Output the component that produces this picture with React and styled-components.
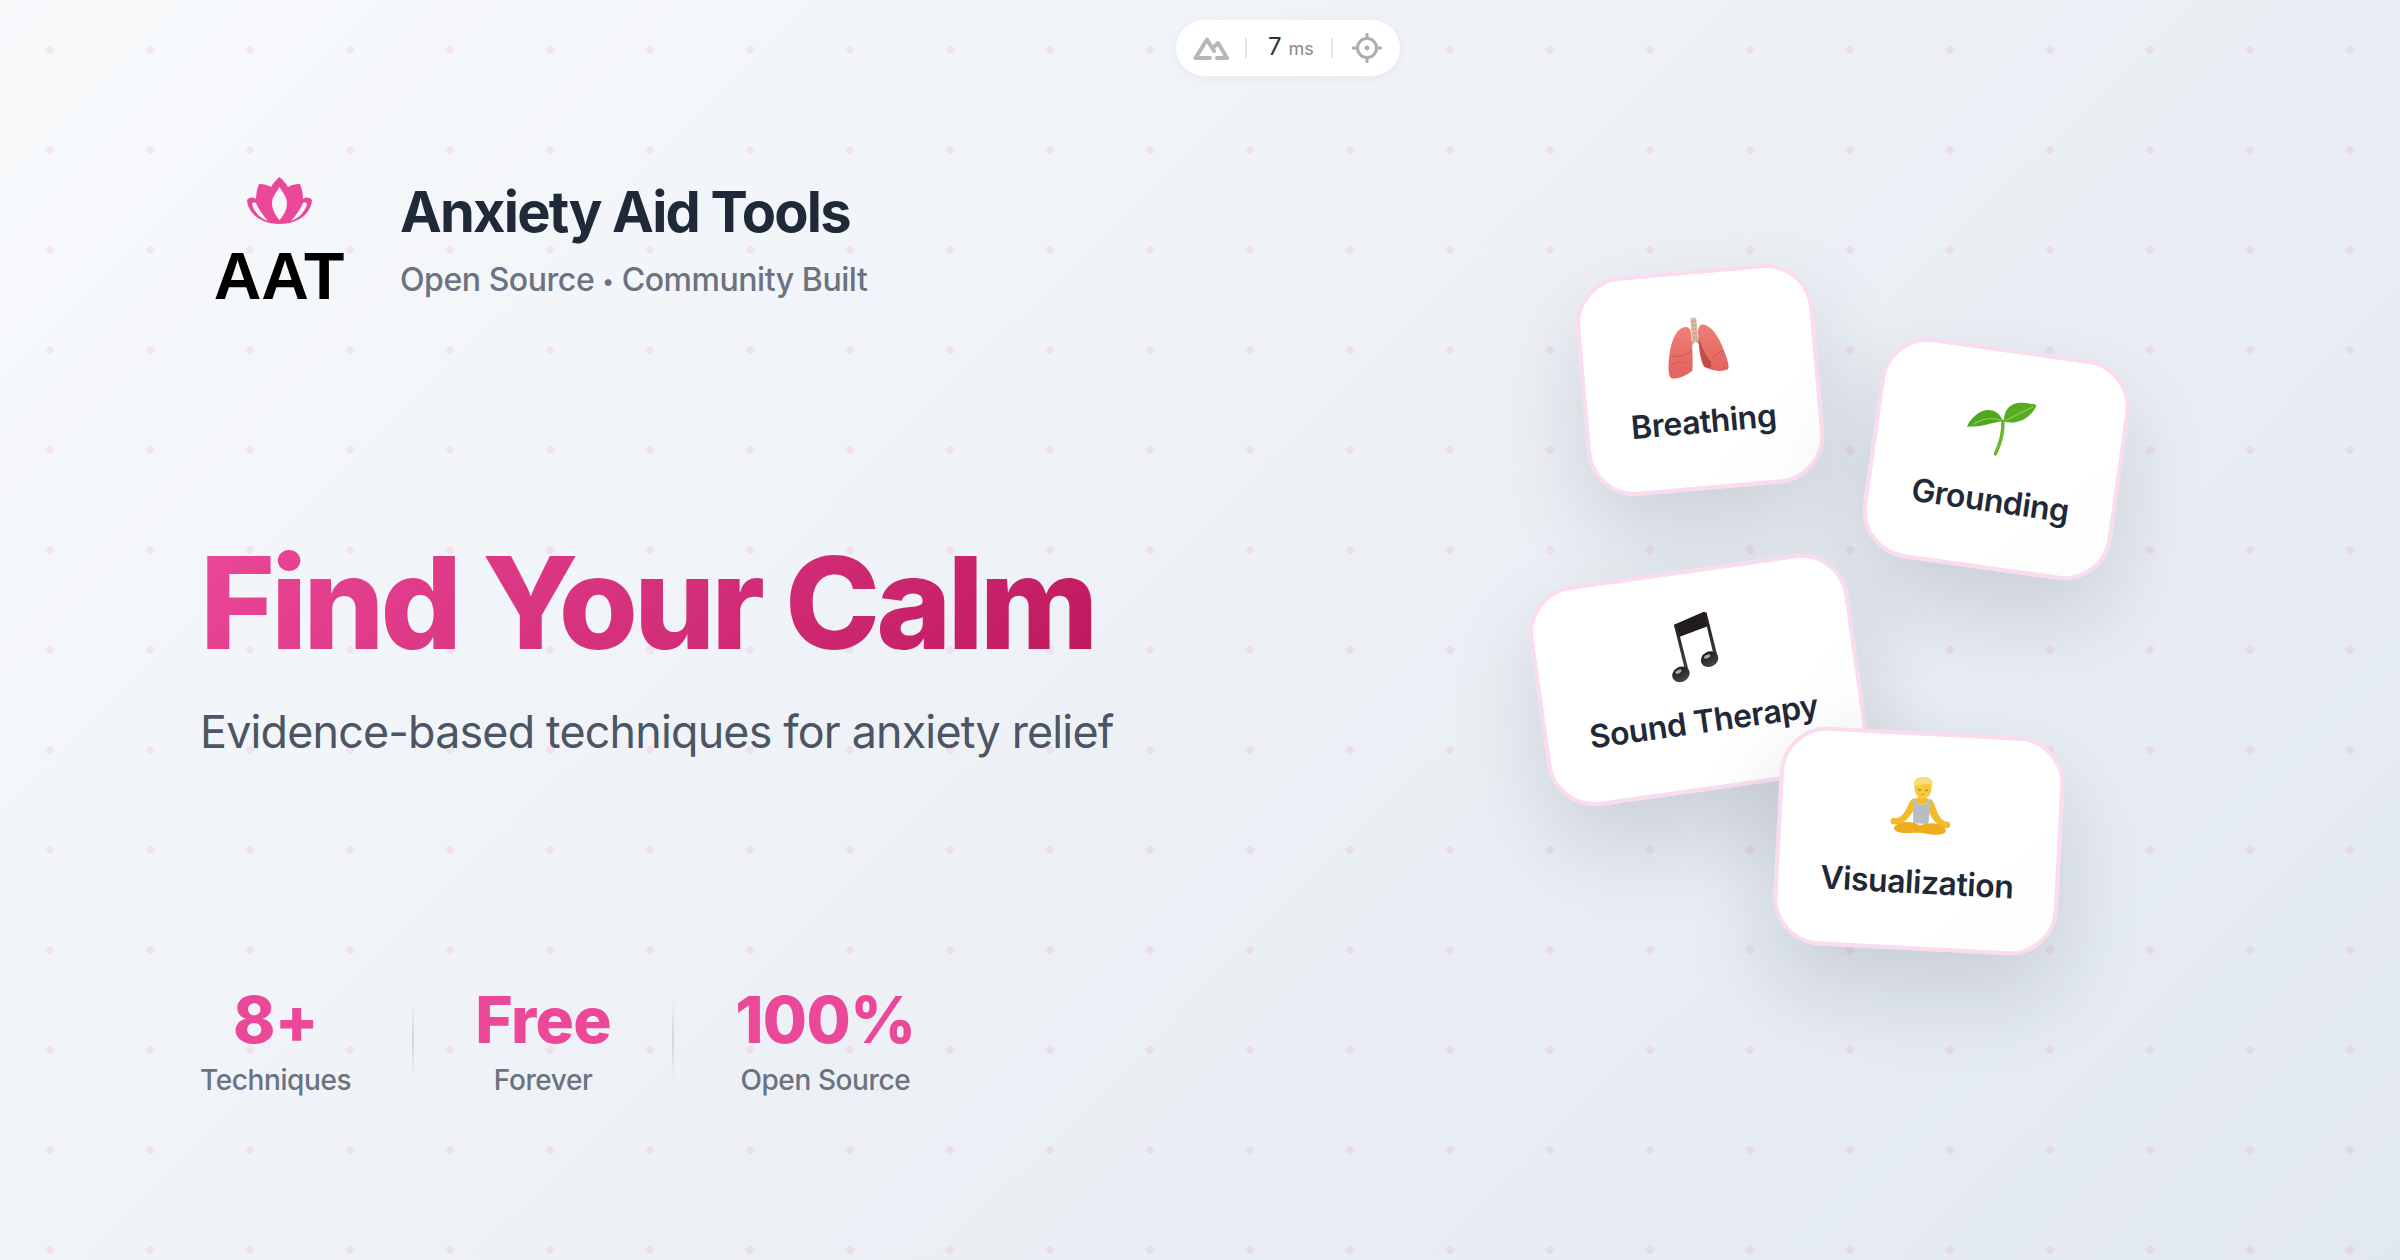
import React from 'react';
import styled, { createGlobalStyle } from 'styled-components';

const Global = createGlobalStyle`
  html, body { margin: 0; padding: 0; }
  body { font-family: Inter, "Liberation Sans", sans-serif; }
`;

const Page = styled.div`
  position: relative;
  width: 2400px;
  height: 1260px;
  overflow: hidden;
  box-sizing: border-box;
  padding: 177px 200px 0;
  background-color: #f8fafc;
  background-image:
    radial-gradient(circle at 50px 50px, rgba(236, 72, 153, 0.1) 4px, transparent 4.6px),
    linear-gradient(135deg, #f8fafc 0%, #e2e8f0 100%);
  background-size: 100px 100px, 100% 100%;
`;

const Left = styled.div`
  display: flex;
  flex-direction: column;
  align-items: flex-start;
`;

const Brand = styled.div`
  display: flex;
  align-items: flex-start;
  gap: 56px;
  margin-left: 14px;
`;

const LogoMark = styled.div`
  display: flex;
  flex-direction: column;
  align-items: center;
  width: 130px;
`;

const LogoText = styled.div`
  font-family: "Liberation Sans", Arial, sans-serif;
  font-weight: 700;
  font-size: 66px;
  line-height: 66px;
  color: #000;
  margin-top: 18px;
`;

const BrandText = styled.div`
  display: flex;
  flex-direction: column;
  padding-top: 1px;
`;

const BrandTitle = styled.h1`
  margin: 0;
  font-size: 56px;
  line-height: 68px;
  font-weight: 700;
  color: #1f2937;
  letter-spacing: -1.8px;
`;

const BrandSub = styled.div`
  font-size: 32px;
  line-height: 44px;
  font-weight: 500;
  color: #6b7280;
  letter-spacing: -0.45px;
  margin-top: 12px;
`;

const Bullet = styled.span`
  font-size: 22px;
  vertical-align: 2px;
`;

const Headline = styled.h2`
  margin: 217px 0 0;
  font-size: 128px;
  line-height: 154px;
  font-weight: 800;
  letter-spacing: -4px;
  color: transparent;
  background: linear-gradient(135deg, #ec4899 0%, #be185d 100%);
  -webkit-background-clip: text;
  background-clip: text;
`;

const Tagline = styled.p`
  margin: 22px 0 0;
  font-size: 44.8px;
  line-height: 60px;
  font-weight: 400;
  letter-spacing: -0.8px;
  color: #4b5563;
`;

const Stats = styled.div`
  display: flex;
  align-items: center;
  gap: 61px;
  margin-top: 220px;
`;

const Stat = styled.div`
  display: flex;
  flex-direction: column;
  align-items: center;
`;

const StatValue = styled.div`
  font-size: 64px;
  line-height: 76px;
  font-weight: 800;
  letter-spacing: -0.6px;
  color: #ec4899;
`;

const StatLabel = styled.div`
  font-size: 28px;
  line-height: 36px;
  font-weight: 500;
  letter-spacing: -0.4px;
  color: #6b7280;
  margin-top: 4px;
`;

const Divider = styled.div`
  width: 2px;
  height: 80px;
  background: linear-gradient(180deg, transparent, #d1d5db, transparent);
`;

const Card = styled.div`
  position: absolute;
  left: ${p => p.$x}px;
  top: ${p => p.$y}px;
  transform: translate(-50%, -50%) rotate(${p => p.$rot}deg);
  z-index: ${p => p.$z};
  box-sizing: border-box;
  height: ${p => p.$h}px;
  display: flex;
  flex-direction: column;
  align-items: center;
  justify-content: center;
  padding: 0 42px 4px;
  border: 4px solid #fbdcee;
  border-radius: 48px;
  background: linear-gradient(135deg, #ffffff 70%, #fcfcfd 100%);
  box-shadow: 0 40px 90px rgba(15, 23, 42, 0.14);
`;

const CardIcon = styled.div`
  height: 64px;
  display: flex;
  align-items: center;
  justify-content: center;
  transform: translateY(${p => p.$nudge}px);
`;

const CardLabel = styled.div`
  margin-top: 23px;
  font-size: 32px;
  line-height: 40px;
  font-weight: 600;
  letter-spacing: -0.45px;
  color: #1f2937;
  white-space: nowrap;
`;

const DevBar = styled.div`
  position: absolute;
  left: 1176px;
  top: 20px;
  width: 224px;
  height: 56px;
  box-sizing: border-box;
  border-radius: 28px;
  background: #fff;
  box-shadow: 0 2px 12px rgba(15, 23, 42, 0.05);
  display: flex;
  align-items: center;
  padding: 0 17px;
`;

const BarSep = styled.div`
  width: 2px;
  height: 20px;
  background: #e4e4e4;
  margin: 0 ${p => p.$right}px 0 ${p => p.$left}px;
  flex: none;
`;

const Time = styled.div`
  display: flex;
  align-items: baseline;
  gap: 7px;
  font-size: 24px;
  line-height: 28px;
  color: #333;
  span { font-size: 18px; color: #888; }
`;

const NuxtIcon = () => (
  <svg width="36" height="24" viewBox="0 0 36 24" fill="none" stroke="#b6b6b6" strokeWidth="4" strokeLinejoin="round" strokeLinecap="round">
    <path d="M2.5 22 L14 3.5 L21 15 M2.5 22 H17" />
    <path d="M20 12 L25 7 L34 22 H24" />
  </svg>
);

const TargetIcon = () => (
  <svg width="30" height="30" viewBox="0 0 30 30" fill="none" stroke="#adadad" strokeWidth="3">
    <circle cx="15" cy="15" r="9.5" />
    <path d="M15 1 V5 M15 25 V29 M1 15 H5 M25 15 H29" strokeLinecap="round" />
    <circle cx="15" cy="15" r="2.4" fill="#adadad" stroke="none" />
  </svg>
);

const LotusIcon = () => (
  <svg width="67" height="48" viewBox="0 0 67 48">
    <path
      d="M33.5 0 C30 3 27 6 25 10 C22 8 18 7 13 7 C11 12 10 17 10 22 C7 20 4 20 1 23 C2 36 14 47 33.5 47 C53 47 65 36 66 23 C63 20 60 20 57 22 C57 17 56 12 54 7 C49 7 45 8 42 10 C40 6 37 3 33.5 0 Z"
      fill="#ec4899"
    />
    <path d="M33.5 10 C30 16 26 20 26 26 C26 33 30 39 33.5 43 C37 39 41 33 41 26 C41 20 37 16 33.5 10 Z" fill="#f5f7fb" />
    <path d="M6 27 C8 35 14 41 22 44 C17 38 13 33 10 26 C9 25 7 25 6 27 Z" fill="#f5f7fb" />
    <path d="M61 27 C59 35 53 41 45 44 C50 38 54 33 57 26 C58 25 60 25 61 27 Z" fill="#f5f7fb" />
  </svg>
);

const LungsIcon = () => (
  <svg width="62" height="60" viewBox="0 0 62 60">
    <defs>
      <linearGradient id="lungL" x1="0" y1="0" x2="0" y2="1">
        <stop offset="0" stopColor="#ee7f77" />
        <stop offset="1" stopColor="#e4625d" />
      </linearGradient>
    </defs>
    <rect x="26.5" y="0" width="6" height="24" rx="2" fill="#dcb9a6" />
    <path d="M27 4 H32 M27 8 H32 M27 12 H32 M27 16 H32 M27 20 H32" stroke="#c49a84" strokeWidth="1" />
    <path d="M29.5 22 L25 27 M29.5 22 L35 27" stroke="#d4ac96" strokeWidth="3" />
    <path d="M20 9 C12 9 5 22 2 38 C0 48 -1 57 3 59 C10 60 18 57 24 53 C26 40 26 25 26 17 C26 11 24 9 20 9 Z" fill="url(#lungL)" />
    <path d="M38 8 C46 9 53 20 57 35 C60 45 62 54 59 55 C52 57 43 55 36 50 C33 38 33 22 33 16 C33 11 35 8 38 8 Z" fill="url(#lungL)" />
    <path d="M33 20 C32 32 33 44 36 50 C41 54 46 52 42 44 C38 38 35 28 33 20 Z" fill="#b5403d" opacity="0.75" />
    <path d="M4 36 C11 39 18 38 25 33 M3 46 C8 42 14 42 18 46" stroke="#cf5a54" strokeWidth="1" fill="none" />
    <path d="M57 36 C53 36 50 38 46 42" stroke="#cf5a54" strokeWidth="1" fill="none" />
  </svg>
);

const SproutIcon = () => (
  <svg width="66" height="58" viewBox="0 0 68 56" preserveAspectRatio="none">
    <path d="M33 53 C36 44 38 32 36 21" stroke="#6cb52f" strokeWidth="3.6" fill="none" strokeLinecap="round" />
    <path d="M0 31 C3 21 12 12 22 12 C29 12 34 17 36 21 C30 22 22 26 15 28 C9 30 4 30 0 31 Z" fill="#4ea71f" />
    <path d="M37 21 C35 11 40 3 50 1 C56 0 63 0 68 1 C66 8 61 15 54 18 C48 21 42 22 37 21 Z" fill="#57ac24" />
    <path d="M38 20 C46 15 55 9 65 3" stroke="#8fd455" strokeWidth="1" fill="none" />
    <path d="M6 28 C14 21 24 19 34 20" stroke="#8fd455" strokeWidth="1" fill="none" />
  </svg>
);

const NotesIcon = () => (
  <svg width="50" height="68" viewBox="0 0 50 68">
    <defs>
      <linearGradient id="noteFill" x1="0" y1="0" x2="0" y2="1">
        <stop offset="0" stopColor="#1f1b1d" />
        <stop offset="1" stopColor="#42464c" />
      </linearGradient>
    </defs>
    <path d="M9 10 L41 1 L43 16 L11 23 Z" fill="#231c1e" />
    <path d="M9 10 L12 10 L17.5 60 L14 60 Z M40 2 L43 2 L48 49 L44.5 50 Z" fill="url(#noteFill)" />
    <ellipse cx="9" cy="60" rx="9" ry="7.5" fill="url(#noteFill)" transform="rotate(-20 9 60)" />
    <ellipse cx="39.5" cy="49" rx="9" ry="7.5" fill="url(#noteFill)" transform="rotate(-20 39.5 49)" />
    <ellipse cx="7" cy="57" rx="3.4" ry="1.7" fill="#a5abb3" transform="rotate(-20 7 57)" />
    <ellipse cx="37.5" cy="46" rx="3.4" ry="1.7" fill="#a5abb3" transform="rotate(-20 37.5 46)" />
  </svg>
);

const PersonIcon = () => (
  <svg width="60" height="58" viewBox="0 0 60 58">
    <path d="M22 22 C18 24 17 30 14 36 C11 41 7 43 3 44 L5 49 C10 49 15 46 19 40 C22 36 24 32 25 28 Z" fill="#f3bb2c" />
    <path d="M39 22 C43 24 44 30 47 36 C50 41 53 43 57 45 L55 50 C50 49 45 46 41 40 C38 36 36 32 35 28 Z" fill="#f3bb2c" />
    <circle cx="3.5" cy="46" r="3.4" fill="#f3bb2c" />
    <circle cx="56.5" cy="47" r="3.4" fill="#f3bb2c" />
    <path d="M24 22 C24 26 26 28 30 28 C34 28 37 26 37 22 L39.5 23 L38 47 H23 L21.5 23 Z" fill="#b8bdc4" />
    <path d="M24 22 C24 26 26 28 30 28 C34 28 37 26 37 22 L33 20 H28 Z" fill="#f3bb2c" />
    <path d="M4 52 C8 46 20 44 30 49 C40 44 52 46 56 52 C57 57 46 58 38 57 C34 56 26 56 22 57 C14 58 3 57 4 52 Z" fill="#efac1c" />
    <ellipse cx="31" cy="12" rx="8.5" ry="10" fill="#f7c93f" />
    <path d="M22 11 C19 3 26 0 32 0 C38 0 42 4 40 11 C39 7 36 6 33 7 C29 9 24 8 22 11 Z" fill="#f9dd7c" />
    <path d="M26 13 C27 14 28 14 29 13 M33 13 C34 14 35 14 36 13 M30 17.5 H32" stroke="#a5761a" strokeWidth="1" fill="none" />
  </svg>
);

const cards = [
  { label: 'Breathing', icon: <LungsIcon />, x: 1699.5, y: 380, rot: -5, h: 220, nudge: 0, z: 1 },
  { label: 'Grounding', icon: <SproutIcon />, x: 1996, y: 459, rot: 8, h: 222, nudge: 2, z: 1 },
  { label: 'Sound Therapy', icon: <NotesIcon />, x: 1697.5, y: 680, rot: -8, h: 222, nudge: -1, z: 1 },
  { label: 'Visualization', icon: <PersonIcon />, x: 1919, y: 840.5, rot: 3, h: 219, nudge: -2, z: 2 },
];

const stats = [
  { value: '8+', label: 'Techniques' },
  { value: 'Free', label: 'Forever' },
  { value: '100%', label: 'Open Source' },
];

export default function App() {
  return (
    <Page>
      <Global />
      <DevBar>
        <NuxtIcon />
        <BarSep $left={16} $right={21} />
        <Time>7<span>ms</span></Time>
        <BarSep $left={17} $right={19} />
        <TargetIcon />
      </DevBar>

      <Left>
        <Brand>
          <LogoMark>
            <LotusIcon />
            <LogoText>AAT</LogoText>
          </LogoMark>
          <BrandText>
            <BrandTitle>Anxiety Aid Tools</BrandTitle>
            <BrandSub>Open Source <Bullet>•</Bullet> Community Built</BrandSub>
          </BrandText>
        </Brand>
        <Headline>Find Your Calm</Headline>
        <Tagline>Evidence-based techniques for anxiety relief</Tagline>
        <Stats>
          {stats.map((s, i) => (
            <React.Fragment key={s.label}>
              {i > 0 && <Divider />}
              <Stat>
                <StatValue>{s.value}</StatValue>
                <StatLabel>{s.label}</StatLabel>
              </Stat>
            </React.Fragment>
          ))}
        </Stats>
      </Left>

      {cards.map(c => (
        <Card key={c.label} $x={c.x} $y={c.y} $rot={c.rot} $h={c.h} $z={c.z}>
          <CardIcon $nudge={c.nudge}>{c.icon}</CardIcon>
          <CardLabel>{c.label}</CardLabel>
        </Card>
      ))}
    </Page>
  );
}
